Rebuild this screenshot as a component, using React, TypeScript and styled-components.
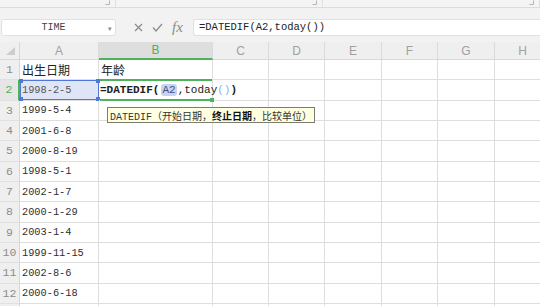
import React from 'react';
import styled, { createGlobalStyle, css } from 'styled-components';

const GREEN = '#4db35a';
const BLUE = '#4f77dc';
const MONO = `"Liberation Mono", "Noto Sans CJK SC", monospace`;
const CJK = `"Noto Sans CJK SC", "Noto Sans", sans-serif`;

const Global = createGlobalStyle`
  html, body { margin: 0; padding: 0; background: #fff; overflow: hidden; }
  body { width: 540px; height: 306px; font-family: ${CJK}; }
  * { box-sizing: border-box; }
`;

const Page = styled.div`
  width: 540px;
  height: 306px;
  overflow: hidden;
  display: flex;
  flex-direction: column;
  background: #fff;
`;

const RibbonStrip = styled.div`
  height: 8px;
  flex-shrink: 0;
  display: flex;
  background: #f4f4f4;
  border-bottom: 1px solid #dcdcdc;
`;

const RibbonGroup = styled.div<{ $w?: number }>`
  ${(p) => (p.$w ? css`width: ${p.$w}px;` : css`flex: 1;`)}
  border-right: 1px solid #e0e0e0;
  display: flex;
  justify-content: flex-end;
  align-items: flex-end;
  padding: 0 5px 2px 0;
`;

const Launcher = () => (
  <svg width="5" height="5" viewBox="0 0 5 5">
    <path d="M4.5 0.5 V4.5 H0.5" fill="none" stroke="#b5b5b5" strokeWidth="1" />
  </svg>
);

const FormulaBar = styled.div`
  height: 34px;
  flex-shrink: 0;
  display: flex;
  align-items: flex-start;
  padding-top: 11px;
  background: #f2f2f2;
`;

const NameBox = styled.div`
  margin-left: 1px;
  width: 115px;
  height: 17px;
  display: flex;
  align-items: center;
  background: #fff;
  border: 1px solid #e1e1e1;
  border-radius: 3px;
`;

const NameText = styled.span`
  flex: 1;
  text-align: center;
  font-family: ${MONO};
  font-size: 10px;
  color: #444;
`;

const Caret = styled.span`
  width: 10px;
  display: flex;
  justify-content: center;
  color: #888;
  font-size: 7px;
`;

const IconGroup = styled.div`
  height: 17px;
  margin-left: 18px;
  display: flex;
  align-items: center;
  gap: 9px;
  color: #8a8a8a;
`;

const Fx = styled.span`
  font-family: "Liberation Serif", serif;
  font-style: italic;
  font-size: 15px;
  line-height: 17px;
  color: #8a8a8a;
  width: 13px;
`;

const FormulaInput = styled.div`
  flex: 1;
  margin-left: 8px;
  height: 17px;
  background: #fff;
  border: 1px solid #e1e1e1;
  border-right: none;
  border-radius: 3px 0 0 3px;
  padding-left: 5px;
  font-family: ${MONO};
  font-size: 10.5px;
  line-height: 15px;
  color: #222;
  white-space: nowrap;
`;

const Sheet = styled.div`
  display: grid;
  grid-template-columns: 20px 79px 114px 56px 56px 57px 56px 57px 56px;
  grid-template-rows: 18px;
  grid-auto-rows: 20.33px;
  width: 551px;
`;

const CornerCell = styled.div`
  background: #efefef;
  border-right: 1px solid #d8d8d8;
  border-bottom: 1px solid #d8d8d8;
  display: flex;
  align-items: center;
  justify-content: center;
  padding: 1px 0 0 2px;
`;

const ColHeader = styled.div<{ $active?: boolean }>`
  display: flex;
  align-items: center;
  justify-content: center;
  font-family: "Liberation Sans", sans-serif;
  font-size: 12px;
  background: ${(p) => (p.$active ? '#dedede' : '#efefef')};
  color: ${(p) => (p.$active ? GREEN : '#a0a0a0')};
  border-right: 1px solid #dadada;
  border-bottom: ${(p) => (p.$active ? `2px solid ${GREEN}` : '1px solid #d8d8d8')};
`;

const RowHeader = styled.div<{ $active?: boolean }>`
  display: flex;
  align-items: center;
  justify-content: center;
  font-family: ${MONO};
  font-size: 11.5px;
  background: ${(p) => (p.$active ? '#e6e6e6' : '#efefef')};
  color: ${(p) => (p.$active ? GREEN : '#8c8c8c')};
  border-right: ${(p) => (p.$active ? `2px solid ${GREEN}` : '1px solid #d6d6d6')};
  border-bottom: 1px solid #e0e0e0;
`;

const Cell = styled.div<{ $kind?: 'text' | 'date' }>`
  position: relative;
  display: flex;
  align-items: center;
  padding-left: 2px;
  border-right: 1px solid #dedede;
  border-bottom: 1px solid #dedede;
  white-space: nowrap;
  color: #222;
  ${(p) =>
    p.$kind === 'date'
      ? css`
          font-family: ${MONO};
          font-size: 10.3px;
          color: #2e2e2e;
        `
      : css`
          font-family: ${CJK};
          font-size: 12px;
        `}
`;

const RefBox = styled.div`
  position: absolute;
  inset: 0 -1px 0 0;
  background: #dfe5f6;
  border: 1px solid ${BLUE};
`;

const RefText = styled.span`
  position: relative;
  color: #555;
`;

const Handle = styled.span<{ $x: 'l' | 'r'; $y: 't' | 'b' }>`
  position: absolute;
  width: 4px;
  height: 4px;
  background: ${BLUE};
  ${(p) => (p.$x === 'l' ? 'left: -2px;' : 'right: -2px;')}
  ${(p) => (p.$y === 't' ? 'top: -2px;' : 'bottom: -2px;')}
`;

const EditBox = styled.div`
  position: absolute;
  top: -1px;
  left: 1px;
  right: 0;
  bottom: -1px;
  background: #fff;
  border-top: 2px solid ${GREEN};
  border-bottom: 2px solid ${GREEN};
  display: flex;
  align-items: center;
  white-space: nowrap;
  font-family: ${MONO};
  font-size: 11px;
  color: #222;
  z-index: 2;
`;

const EditHandle = styled.span`
  position: absolute;
  right: -2px;
  bottom: -3px;
  width: 4px;
  height: 4px;
  background: ${GREEN};
`;

const Bold = styled.span`
  font-weight: bold;
`;

const RefToken = styled.span`
  background: #c8d4ef;
  color: #3d5189;
  border-radius: 3px;
  padding: 0 1px;
  margin: 0 1px 0 2px;
`;

const Paren = styled.span`
  color: #8fb0ea;
`;

const Tooltip = styled.div`
  position: absolute;
  left: 8px;
  top: 27px;
  height: 16px;
  padding: 0 2px;
  display: flex;
  align-items: center;
  background: #ffffe1;
  border: 1px solid #7c7c70;
  font-family: ${MONO};
  font-size: 10px;
  color: #333;
  white-space: nowrap;
  z-index: 5;
`;

const TipStrong = styled.b`
  font-weight: bold;
  color: #111;
`;

const COLS = ['A', 'B', 'C', 'D', 'E', 'F', 'G', 'H'];
const DATES = [
  '1998-2-5',
  '1999-5-4',
  '2001-6-8',
  '2000-8-19',
  '1998-5-1',
  '2002-1-7',
  '2000-1-29',
  '2003-1-4',
  '1999-11-15',
  '2002-8-6',
  '2000-6-18',
];

const XIcon = () => (
  <svg width="9" height="9" viewBox="0 0 9 9">
    <path d="M1 1 L8 8 M8 1 L1 8" stroke="#8a8a8a" strokeWidth="1.2" fill="none" />
  </svg>
);

const CheckIcon = () => (
  <svg width="11" height="9" viewBox="0 0 11 9">
    <path d="M1 4.5 L4 8 L10 1" stroke="#8a8a8a" strokeWidth="1.2" fill="none" />
  </svg>
);

const CornerTriangle = () => (
  <svg width="9" height="8" viewBox="0 0 9 8">
    <path d="M9 0 L9 8 L0 8 Z" fill="#cdcdcd" />
  </svg>
);

function renderA(row: number) {
  if (row === 1) return <Cell key="a1">出生日期</Cell>;
  const d = DATES[row - 2];
  if (row === 2) {
    return (
      <Cell key="a2" $kind="date">
        <RefBox>
          <Handle $x="l" $y="t" />
          <Handle $x="r" $y="t" />
          <Handle $x="l" $y="b" />
          <Handle $x="r" $y="b" />
        </RefBox>
        <RefText>{d}</RefText>
      </Cell>
    );
  }
  return (
    <Cell key={`a${row}`} $kind="date">
      {d ?? ''}
    </Cell>
  );
}

function renderB(row: number) {
  if (row === 1) return <Cell key="b1">年龄</Cell>;
  if (row === 2) {
    return (
      <Cell key="b2">
        <EditBox>
          <Bold>=DATEDIF(</Bold>
          <RefToken>A2</RefToken>
          <span>,today</span>
          <Paren>()</Paren>
          <Bold>)</Bold>
          <EditHandle />
        </EditBox>
        <Tooltip>
          DATEDIF（开始日期，<TipStrong>终止日期</TipStrong>，比较单位）
        </Tooltip>
      </Cell>
    );
  }
  return <Cell key={`b${row}`} />;
}

export default function App() {
  const rows = Array.from({ length: 13 }, (_, i) => i + 1);
  return (
    <Page>
      <Global />
      <RibbonStrip>
        <RibbonGroup $w={116}>
          <Launcher />
        </RibbonGroup>
        <RibbonGroup $w={207}>
          <Launcher />
        </RibbonGroup>
        <RibbonGroup>
          <Launcher />
        </RibbonGroup>
      </RibbonStrip>
      <FormulaBar>
        <NameBox>
          <NameText>TIME</NameText>
          <Caret>▾</Caret>
        </NameBox>
        <IconGroup>
          <XIcon />
          <CheckIcon />
          <Fx>fx</Fx>
        </IconGroup>
        <FormulaInput>=DATEDIF(A2,today())</FormulaInput>
      </FormulaBar>
      <Sheet>
        <CornerCell>
          <CornerTriangle />
        </CornerCell>
        {COLS.map((c) => (
          <ColHeader key={c} $active={c === 'B'}>
            {c}
          </ColHeader>
        ))}
        {rows.map((r) => (
          <React.Fragment key={r}>
            <RowHeader $active={r === 2}>{r <= 12 ? r : ''}</RowHeader>
            {renderA(r)}
            {renderB(r)}
            {COLS.slice(2).map((c) => (
              <Cell key={`${c}${r}`} />
            ))}
          </React.Fragment>
        ))}
      </Sheet>
    </Page>
  );
}
